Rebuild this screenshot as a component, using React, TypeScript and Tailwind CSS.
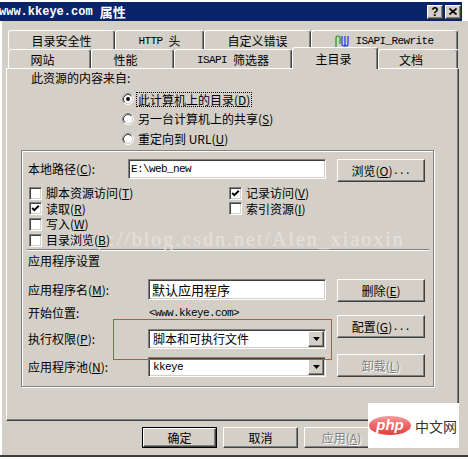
import React from "react";

const MONO = "font-[family-name:'Liberation_Mono',monospace] text-[11px] tracking-[-0.6px]";
const RAISED =
  "bg-[#d4d0c8] border border-t-white border-l-white border-r-[#404040] border-b-[#404040] shadow-[inset_-1px_-1px_0_#808080]";
const SUNKEN =
  "bg-white border border-t-[#808080] border-l-[#808080] border-r-white border-b-white shadow-[inset_1px_1px_0_#404040,inset_-1px_-1px_0_#d4d0c8]";
const DISABLED = "text-[#808080] [text-shadow:1px_1px_0_#fff]";

function U({ children }: { children: React.ReactNode }) {
  return <span className="underline underline-offset-1">{children}</span>;
}

function Tab({ className, children }: { className: string; children: React.ReactNode }) {
  return (
    <div
      className={
        "relative shrink-0 flex items-center justify-center whitespace-nowrap bg-[#d4d0c8] border-t border-l border-r border-t-white border-l-white border-r-[#404040] rounded-t-[3px] shadow-[inset_-1px_0_0_#808080] " +
        className
      }
    >
      {children}
    </div>
  );
}

function Radio({ checked }: { checked?: boolean }) {
  return (
    <svg width="12" height="12" viewBox="0 0 12 12" className="shrink-0">
      <circle cx="6" cy="6" r="5.5" fill="none" stroke="#ffffff" />
      <path d="M2.11 9.89 A5.5 5.5 0 0 1 9.89 2.11" fill="none" stroke="#808080" />
      <circle cx="6" cy="6" r="4.5" fill="#ffffff" stroke="#d4d0c8" />
      <path d="M2.82 9.18 A4.5 4.5 0 0 1 9.18 2.82" fill="none" stroke="#404040" />
      {checked && <circle cx="6" cy="6" r="1.9" fill="#000" />}
    </svg>
  );
}

function Check({ checked, children }: { checked?: boolean; children: React.ReactNode }) {
  return (
    <div className="flex items-center">
      <div className={"relative w-[13px] h-[13px] shrink-0 " + SUNKEN}>
        {checked && (
          <svg width="13" height="13" viewBox="0 0 13 13" className="absolute -left-[1px] -top-[1px]">
            <polyline points="3.2,6 5.3,8.2 9.8,3.8" fill="none" stroke="#000" strokeWidth="1.9" />
          </svg>
        )}
      </div>
      <span className="relative z-[1] ml-[4px] whitespace-nowrap">{children}</span>
    </div>
  );
}

function Btn({
  className,
  children,
  disabled,
}: {
  className: string;
  children: React.ReactNode;
  disabled?: boolean;
}) {
  return (
    <div className={"flex items-center justify-center whitespace-nowrap " + RAISED + " " + className + (disabled ? " " + DISABLED : "")}>
      {children}
    </div>
  );
}

function Arrow() {
  return (
    <svg width="7" height="4" viewBox="0 0 7 4">
      <polygon points="0,0 7,0 3.5,4" fill="#000" />
    </svg>
  );
}

function Select({ children }: { children: React.ReactNode }) {
  return (
    <div className={"w-[178px] h-[20px] flex items-stretch p-[1px] " + SUNKEN}>
      <div className="flex-1 flex items-center pl-[3px] whitespace-nowrap">{children}</div>
      <div className={"w-[16px] flex items-center justify-center " + RAISED}>
        <Arrow />
      </div>
    </div>
  );
}

export default function App() {
  return (
    <div className="relative w-[468px] h-[459px] bg-white overflow-hidden text-[12px] leading-[14px] text-black font-[family-name:'Noto_Sans_CJK_SC',sans-serif]">
      {/* title bar */}
      <div className="mt-[2px] flex">
        <div className="w-[462px] h-[19px] bg-[#0a246a] flex items-center">
          <div className="-ml-[1px] text-white font-bold text-[12px] whitespace-nowrap flex items-center">
            <span className="font-[family-name:'Liberation_Mono',monospace]">www.kkeye.com&nbsp;</span>
            <span className="text-[13px]">属性</span>
          </div>
          <div className="ml-auto mr-[1px] flex gap-[2px]">
            <div className={"w-[16px] h-[14px] flex items-center justify-center " + RAISED}>
              <span className="font-[family-name:'Liberation_Sans',sans-serif] font-bold text-[12px] leading-[12px]">?</span>
            </div>
            <div className={"w-[16px] h-[14px] flex items-center justify-center " + RAISED}>
              <svg width="8" height="7" viewBox="0 0 8 7">
                <path d="M0.5 0.5 L7.5 6.5 M7.5 0.5 L0.5 6.5" stroke="#000" strokeWidth="1.6" />
              </svg>
            </div>
          </div>
        </div>
      </div>

      {/* window body */}
      <div className="w-[468px] h-[436px] bg-[#d4d0c8] shadow-[inset_2px_0_0_#fff] border-b-2 border-b-[#404040]">
        {/* tabs */}
        <div className="pt-[9px] pl-[8px]">
          <div className="flex h-[19px]">
            <Tab className="w-[107px] h-[19px] pt-[2px]">目录安全性</Tab>
            <Tab className="w-[89px] h-[19px] pt-[2px]">
              <span className={MONO}>HTTP&nbsp;</span>头
            </Tab>
            <Tab className="w-[107px] h-[19px] pt-[2px]">自定义错误</Tab>
            <Tab className="w-[147px] h-[19px] pt-[2px]">
              <svg width="14" height="12" viewBox="0 0 14 12" className="mr-[6px]">
                <path d="M1 12 V3 Q1 1 3 1 Q5 1 5 3 V9" fill="none" stroke="#1a9a1a" strokeWidth="1.2" />
                <path d="M7 1 V9 Q7 11 8.5 11 Q10 11 10 9 V1 M10 9 Q10 11 11.5 11 Q13 11 13 9 V1" fill="none" stroke="#1f34e6" strokeWidth="1.2" />
              </svg>
              <span className={MONO}>ISAPI_Rewrite</span>
            </Tab>
          </div>
          <div className="flex h-[19px] items-end">
            <Tab className="w-[83px] h-[19px] pt-[2px] pr-[14px]">网站</Tab>
            <Tab className="w-[83px] h-[19px] pt-[2px] pr-[14px]">性能</Tab>
            <Tab className="w-[118px] h-[19px] pt-[2px]">
              <span className={MONO}>ISAPI&nbsp;</span>筛选器
            </Tab>
            <Tab className="w-[86px] h-[22px] -mb-[1px] z-10 pr-[3px]">主目录</Tab>
            <Tab className="w-[80px] h-[19px] pt-[2px] pr-[14px]">文档</Tab>
          </div>
        </div>

        {/* panel */}
        <div className="ml-[6px] w-[453px] h-[353px] border border-t-white border-l-white border-r-[#404040] border-b-[#404040] shadow-[inset_-1px_-1px_0_#808080]">
          <div className="mt-[2px] pl-[24px] h-[14px]">此资源的内容来自:</div>
          <div className="mt-[4px] pl-[115px]">
            <div className="h-[20px] flex items-center">
              <Radio checked />
              <span className="ml-[2px] px-[1px] leading-[13px] border border-dotted border-black whitespace-nowrap">
                此计算机上的目录(<U>D</U>)
              </span>
            </div>
            <div className="h-[20px] flex items-center">
              <Radio />
              <span className="ml-[4px] whitespace-nowrap">
                另一台计算机上的共享(<U>S</U>)
              </span>
            </div>
            <div className="h-[20px] flex items-center">
              <Radio />
              <span className="ml-[4px] whitespace-nowrap">
                重定向到 URL(<U>U</U>)
              </span>
            </div>
          </div>

          {/* group box */}
          <div className="mt-[1px] ml-[14px] w-[413px] h-[237px] border border-[#808080] shadow-[1px_1px_0_#fff,inset_1px_1px_0_#fff]">
            <div className="mt-[8px] pl-[6px] flex h-[23px]">
              <div className="w-[100px] h-[19px] leading-[19px] whitespace-nowrap">
                本地路径(<U>C</U>):
              </div>
              <div className={"w-[198px] h-[20px] flex items-center pl-[2px] " + SUNKEN}>
                <span className={MONO}>{"E:\\web_new"}</span>
              </div>
              <Btn className="ml-[11px] w-[88px] h-[23px]">
                浏览(<U>O</U>)<span className={MONO}>...</span>
              </Btn>
            </div>

            <div className="mt-[3px] pl-[7px]">
              <div className="flex h-[16px] items-center">
                <div className="w-[200px]">
                  <Check>
                    脚本资源访问(<U>T</U>)
                  </Check>
                </div>
                <Check checked>
                  记录访问(<U>V</U>)
                </Check>
              </div>
              <div className="flex h-[15px] items-center">
                <div className="w-[200px]">
                  <Check checked>
                    读取(<U>R</U>)
                  </Check>
                </div>
                <Check>
                  索引资源(<U>I</U>)
                </Check>
              </div>
              <div className="flex h-[16px] items-center">
                <Check>
                  写入(<U>W</U>)
                </Check>
              </div>
              <div className="flex h-[16px] items-center">
                <Check>
                  目录浏览(<U>B</U>)
                </Check>
              </div>
            </div>

            <div className="mt-[1px] ml-[5px] w-[402px] h-[2px] border-t border-t-[#808080] border-b border-b-white" />
            <div className="mt-[3px] pl-[6px] h-[14px]">应用程序设置</div>

            <div className="mt-[11px] pl-[6px] flex">
              <div className="w-[298px]">
                <div className="flex h-[21px]">
                  <div className="w-[120px] leading-[21px] whitespace-nowrap">
                    应用程序名(<U>M</U>):
                  </div>
                  <div className={"w-[178px] h-[21px] flex items-center pl-[3px] text-[13px] " + SUNKEN}>默认应用程序</div>
                </div>
                <div className="mt-[6px] flex h-[14px]">
                  <div className="w-[121px]">开始位置:</div>
                  <span className={MONO}>&lt;www.kkeye.com&gt;</span>
                </div>
                <div className="mt-[9px] flex h-[20px]">
                  <div className="w-[120px] leading-[20px] whitespace-nowrap">
                    执行权限(<U>P</U>):
                  </div>
                  <Select>脚本和可执行文件</Select>
                </div>
                <div className="mt-[8px] flex h-[20px]">
                  <div className="w-[120px] leading-[20px] whitespace-nowrap">
                    应用程序池(<U>N</U>):
                  </div>
                  <Select>
                    <span className={MONO}>kkeye</span>
                  </Select>
                </div>
              </div>
              <div className="ml-[11px] flex flex-col">
                <Btn className="w-[88px] h-[23px]">
                  删除(<U>E</U>)
                </Btn>
                <Btn className="mt-[13px] w-[88px] h-[23px]">
                  配置(<U>G</U>)<span className={MONO}>...</span>
                </Btn>
                <Btn className="mt-[16px] w-[88px] h-[23px]" disabled>
                  卸载(<U>L</U>)
                </Btn>
              </div>
            </div>
          </div>
        </div>

        {/* dialog buttons */}
        <div className="mt-[6px] pl-[142px] flex gap-[6px]">
          <div className="w-[75px] h-[21px] border border-black">
            <Btn className="w-full h-full">确定</Btn>
          </div>
          <Btn className="w-[75px] h-[21px]">取消</Btn>
          <Btn className="w-[75px] h-[21px]" disabled>
            应用(<U>A</U>)
          </Btn>
        </div>
      </div>

      {/* watermark */}
      <div className="absolute z-0 left-[70px] top-[229px] pointer-events-none whitespace-nowrap text-[20px] leading-[20px] tracking-[2px] text-[#e4e1dc] font-[family-name:'Liberation_Serif',serif]">
        http://blog.csdn.net/Alen_xiaoxin
      </div>

      {/* red annotation rectangle */}
      <div className="absolute left-[113px] top-[319px] w-[219px] h-[41px] border border-[#d94848] pointer-events-none" />

      {/* php logo */}
      <div className="absolute left-[368px] top-[403px] w-[91px] h-[45px] bg-white flex items-center">
        <div className="ml-[1px] w-[42px] h-[19px] rounded-[50%] bg-[linear-gradient(180deg,#f59a9a_0%,#ef6b6b_45%,#e63c3c_100%)] flex items-center justify-center">
          <span className="text-white italic font-bold text-[15px] leading-[15px] -mt-[2px] font-[family-name:'Liberation_Sans',sans-serif]">php</span>
        </div>
        <span className="ml-[4px] text-[14px] leading-[14px] text-[#333]">中文网</span>
      </div>
    </div>
  );
}
